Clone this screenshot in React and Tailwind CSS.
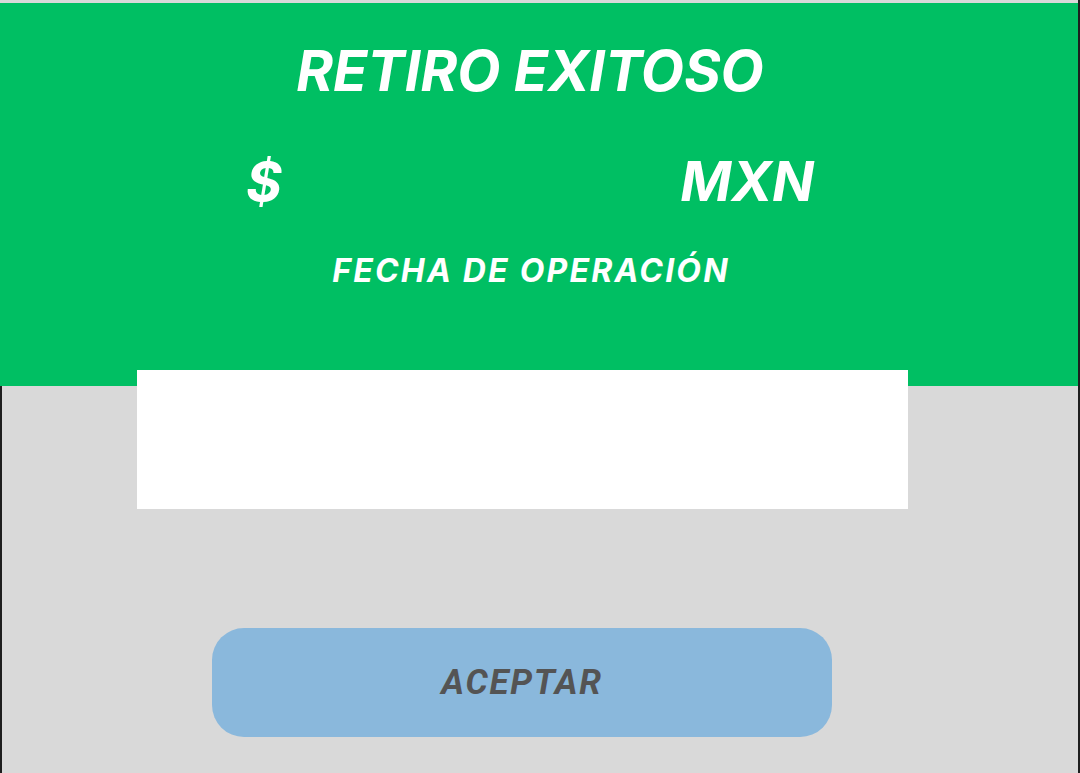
export default function App() {
  const inter = { fontFamily: "Inter, 'Noto Sans', sans-serif" };
  return (
    <div className="w-[1080px] h-[773px] flex overflow-hidden bg-[#d9d9d9]">
      <div className="w-[1078px] h-full flex flex-col pt-[3px]">
        <div
          className="h-[383px] w-full bg-[#00bf63] text-white italic font-bold flex flex-col shrink-0"
          style={inter}
        >
          <div className="pt-[40px] pr-[18px] text-center text-[56px] leading-[56px]">
            RETIRO EXITOSO
          </div>
          <div className="mt-[54px] pl-[246px] w-[814px] flex justify-between text-[55px] leading-[56px]">
            <span>$</span>
            <span>MXN</span>
          </div>
          <div className="mt-[46px] pr-[16px] text-center text-[32px] leading-[32px] tracking-[2.2px]">
            FECHA DE OPERACIÓN
          </div>
        </div>
        <div className="flex-1 border-l-2 border-[#1e1e1e] flex flex-col">
          <div className="-mt-[16px] ml-[135px] w-[771px] h-[139px] bg-white shrink-0" />
          <button
            className="mt-[119px] ml-[210px] w-[620px] h-[109px] rounded-[32px] bg-[#8ab8dc] flex items-center justify-center text-[#545454] italic font-bold text-[35px] leading-none tracking-[1.7px] shrink-0"
            style={{ fontFamily: "Roboto, 'Noto Sans', sans-serif" }}
          >
            ACEPTAR
          </button>
        </div>
      </div>
      <div className="w-[2px] h-full bg-[#1e1e1e]" />
    </div>
  );
}
